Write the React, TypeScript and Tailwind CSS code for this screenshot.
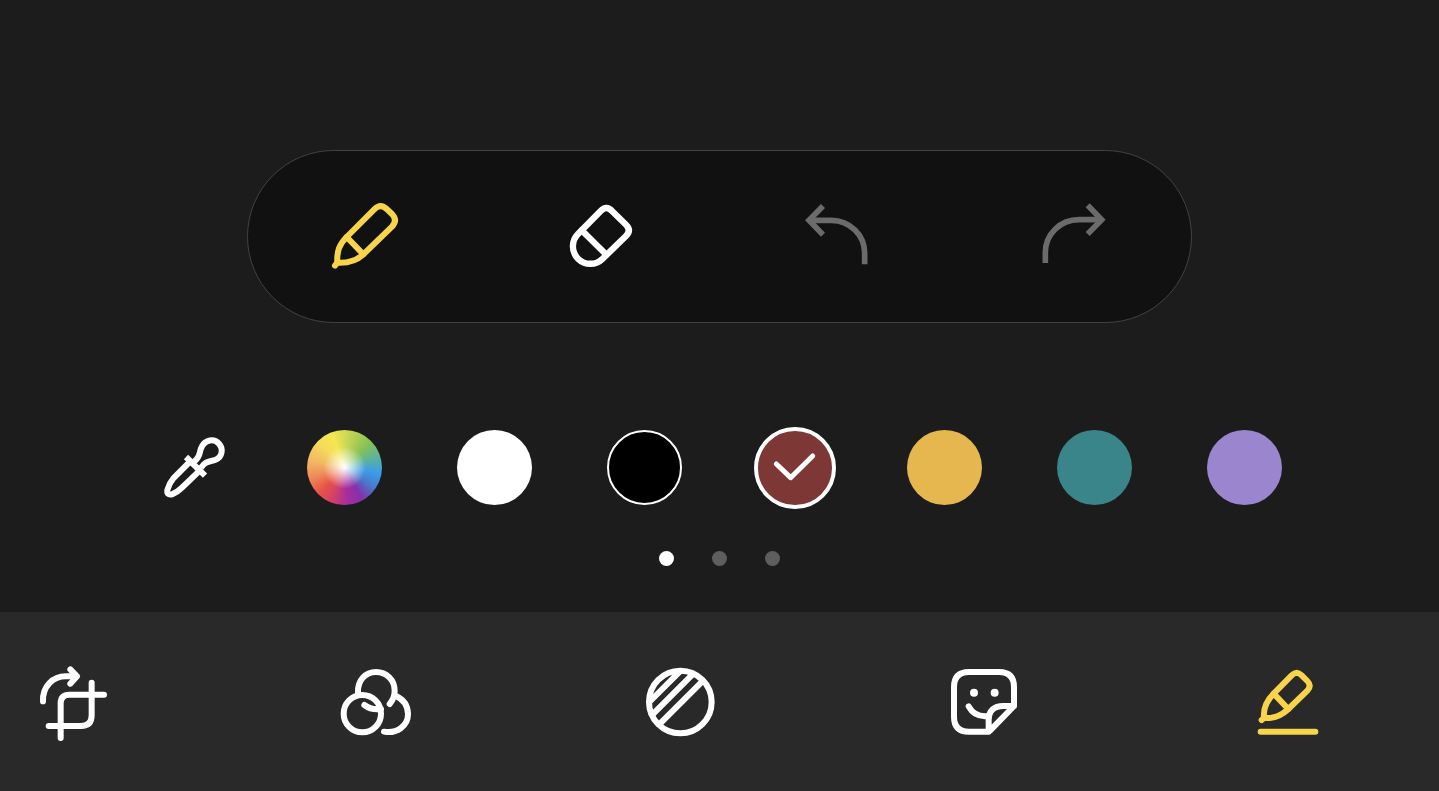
import React, { useState } from 'react';
import clsx from 'clsx';

type IconProps = {
  viewBox?: string;
  width?: number;
  cap?: 'round' | 'butt';
  join?: 'round' | 'miter';
  children: React.ReactNode;
};

function Icon({ viewBox = '0 0 270 270', width = 18, cap = 'round', join = 'round', children }: IconProps) {
  return (
    <svg
      viewBox={viewBox}
      className="size-[90px] shrink-0"
      fill="none"
      stroke="currentColor"
      strokeWidth={width}
      strokeLinecap={cap}
      strokeLinejoin={join}
      aria-hidden="true"
    >
      {children}
    </svg>
  );
}

const PenIcon = () => (
  <Icon viewBox="3 3 270 270">
    <path d="M52 218C50 184 58 163 80 141L162 59Q181 39 200 57L216 72Q234 91 216 110L130 193C110 212 88 220 52 218Z" />
    <path d="M80 141L130 193M52 218L45 227" />
  </Icon>
);

const EraserIcon = () => (
  <Icon viewBox="3 3 270 270" width={19}>
    <path d="M66 132L134 63Q151 45 168 63L210 104Q227 121 210 138L140 206A52 52 0 0 1 66 132Z" />
    <path d="M77 121L151 194" />
  </Icon>
);

const UndoIcon = () => (
  <Icon viewBox="6 3 270 270" width={17} cap="butt" join="miter">
    <path d="M99 48L57 91L99 134" />
    <path d="M57 91H124C180 91 224 136 224 190V223" />
  </Icon>
);

const RedoIcon = () => (
  <Icon viewBox="-5 3 270 270" width={17} cap="butt" join="miter">
    <path d="M174 46L216 89L174 132" />
    <path d="M216 89H148C92 89 47 132 47 188V219" />
  </Icon>
);

const DropperIcon = () => (
  <Icon viewBox="2 2 270 270" width={18} cap="butt">
    <path d="M134 118C156 102 148 88 158 72C168 52 194 48 208 63C223 79 219 104 199 112C181 119 171 114 155 136" />
    <path d="M110 104L167 160" />
    <path d="M122 118L72 168Q60 182 54 203Q52 220 68 216Q84 210 98 196L151 145" />
  </Icon>
);

const CropIcon = () => (
  <Icon viewBox="0 -2 270 270">
    <path d="M92 238V134Q92 108 118 108H222" />
    <path d="M185 72V170Q185 202 153 202H56" />
    <path d="M39 128C37 84 68 51 112 53H138" />
    <path d="M121 32L141 53L121 75" />
  </Icon>
);

const FilterIcon = () => (
  <Icon viewBox="6 -1 270 270">
    <circle cx="91" cy="166" r="56" />
    <path d="M78 103C76 66 100 41 132 41C164 41 188 66 188 97C188 113 182 126 173 137" />
    <path d="M97 140Q118 156 147 152" />
    <path d="M192 113C216 124 228 144 228 168C228 203 194 227 156 220" />
  </Icon>
);

const ToneIcon = () => (
  <Icon viewBox="9 0 270 270">
    <circle cx="136" cy="132" r="94" />
    <path d="M132 43L46 129M172 50L53 169M199 73L75 197" />
  </Icon>
);

const StickerIcon = () => (
  <Icon viewBox="3 0 270 270">
    <path d="M146 221H87Q42 221 42 176V87Q42 42 87 42H177Q222 42 222 87V144L150 218Q146 221 146 216V186C146 158 162 144 190 144H222" />
    <path d="M86 145C96 164 115 177 144 174" />
    <circle cx="102" cy="104" r="12" fill="currentColor" stroke="none" />
    <circle cx="164" cy="104" r="12" fill="currentColor" stroke="none" />
  </Icon>
);

const MarkupIcon = () => (
  <Icon>
    <path d="M57 180C54 148 66 127 86 107L140 52Q155 37 170 52L187 69Q201 83 187 98L130 153C108 174 88 182 57 180Z" />
    <path d="M86 107L130 153M57 180L50 186M47 221H211" />
  </Icon>
);

const tools = [
  { id: 'pen', label: 'Pen', icon: PenIcon, disabled: false },
  { id: 'eraser', label: 'Eraser', icon: EraserIcon, disabled: false },
  { id: 'undo', label: 'Undo', icon: UndoIcon, disabled: true },
  { id: 'redo', label: 'Redo', icon: RedoIcon, disabled: true },
];

const swatches = [
  { id: 'white', label: 'White', color: 'bg-white' },
  { id: 'black', label: 'Black', color: 'bg-black border-2 border-white' },
  { id: 'red', label: 'Red', color: 'bg-[#7d3735]' },
  { id: 'yellow', label: 'Yellow', color: 'bg-[#e6b74f]' },
  { id: 'teal', label: 'Teal', color: 'bg-[#3a8589]' },
  { id: 'purple', label: 'Purple', color: 'bg-[#9b85ce]' },
];

const tabs = [
  { id: 'crop', label: 'Crop and rotate', icon: CropIcon },
  { id: 'filter', label: 'Filters', icon: FilterIcon },
  { id: 'tone', label: 'Tone', icon: ToneIcon },
  { id: 'sticker', label: 'Stickers', icon: StickerIcon },
  { id: 'markup', label: 'Draw', icon: MarkupIcon },
];

export default function App() {
  const [tool, setTool] = useState('pen');
  const [color, setColor] = useState('red');
  const [page, setPage] = useState(0);
  const [tab, setTab] = useState('markup');

  return (
    <div className="flex min-h-screen flex-col bg-[#1c1c1c] text-white">
      <main className="flex flex-1 flex-col items-center pt-[150px] pb-[46px]">
        <div className="grid w-full max-w-[945px] grid-cols-4 rounded-full border border-[#424242] bg-[#111111] pt-10 pb-[41px]">
          {tools.map(({ id, label, icon: ToolIcon, disabled }) => (
            <button
              key={id}
              aria-label={label}
              disabled={disabled}
              onClick={() => setTool(id)}
              className={clsx(
                'flex justify-center',
                disabled ? 'text-[#6b6b6b]' : tool === id ? 'text-[#f8d34c]' : 'text-white'
              )}
            >
              <ToolIcon />
            </button>
          ))}
        </div>

        <div className="mt-[99px] grid h-[91px] w-full max-w-[1200px] grid-cols-8 place-items-center">
          <button aria-label="Pick a color">
            <DropperIcon />
          </button>
          <button
            aria-label="Custom color"
            className="size-[75px] rounded-full bg-[radial-gradient(circle,#fff_0%,#ffffff99_16%,#ffffff00_40%),conic-gradient(#d3da55,#86c254_45deg,#5cb39a_72deg,#3d9dea_98deg,#4a78cc_125deg,#8232ac_150deg,#a72d9c_175deg,#d84560_205deg,#e85347_225deg,#ee8e58_255deg,#f2b663_280deg,#f6dc5a_315deg,#f4e650_340deg,#d3da55)]"
          />
          {swatches.map((s) => {
            const selected = color === s.id;
            return (
              <button
                key={s.id}
                aria-label={s.label}
                aria-pressed={selected}
                onClick={() => setColor(s.id)}
                className={clsx(
                  'flex items-center justify-center rounded-full',
                  s.color,
                  selected ? 'size-[82px] border-4 border-white' : 'size-[75px]'
                )}
              >
                {selected && (
                  <Icon viewBox="-1 2 270 270" width={15}>
                    <path d="M78 125L121 166L187 101" />
                  </Icon>
                )}
              </button>
            );
          })}
        </div>

        <div className="mt-[38px] flex gap-[38px]">
          {[0, 1, 2].map((n) => (
            <button
              key={n}
              aria-label={`Palette ${n + 1}`}
              onClick={() => setPage(n)}
              className={clsx('size-[15px] rounded-full', page === n ? 'bg-white' : 'bg-[#5e5e5e]')}
            />
          ))}
        </div>
      </main>

      <nav className="flex justify-between bg-[#292929] pt-[46px] pr-[104px] pb-[43px] pl-[30px]">
        {tabs.map(({ id, label, icon: TabIcon }) => (
          <button
            key={id}
            aria-label={label}
            onClick={() => setTab(id)}
            className={tab === id ? 'text-[#f8d34c]' : 'text-white'}
          >
            <TabIcon />
          </button>
        ))}
      </nav>
    </div>
  );
}
